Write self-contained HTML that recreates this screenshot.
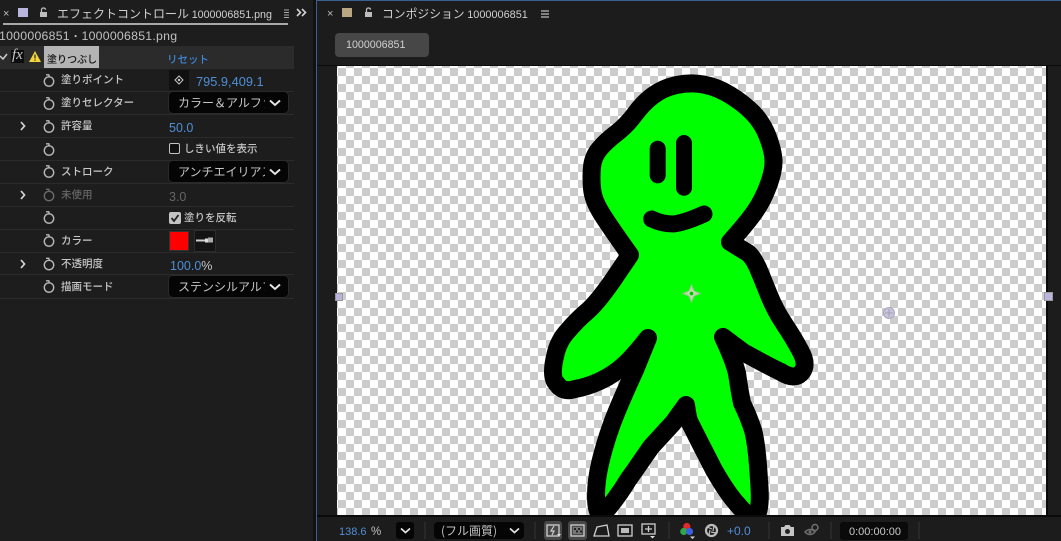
<!DOCTYPE html>
<html lang="ja"><head><meta charset="utf-8"><title>After Effects</title>
<style>
html,body{margin:0;padding:0;width:1061px;height:541px;overflow:hidden;background:#111}
body{position:relative;font-family:"Liberation Sans","Noto Sans CJK JP",sans-serif;color:#c8c8c8;font-size:11px;filter:blur(.3px)}
.a{position:absolute;white-space:nowrap}
.j{font-family:"Noto Sans CJK JP","Liberation Sans",sans-serif}
.lb{position:absolute;left:61px;font-family:"Noto Sans CJK JP",sans-serif;font-size:10.5px;line-height:16px;font-weight:500;color:#c8c8c8;white-space:nowrap}
.sep{position:absolute;left:0;width:294px;height:1px;background:#2b2b2b}
.bl{color:#4f8fd6}
.dd{position:absolute;left:169px;width:119px;height:21px;background:#050505;border-radius:4px;box-shadow:0 0 0 1px #2a2a2a}
.dd span{position:absolute;left:9px;top:0;width:87px;overflow:hidden;font-family:"Noto Sans CJK JP",sans-serif;font-size:12px;line-height:21px;color:#c6c6c6;white-space:nowrap}
.dv{position:absolute;top:522px;width:2px;height:17px;background:#282828}
svg{position:absolute;overflow:visible}
</style></head><body>

<!-- left panel -->
<div class="a" style="left:0;top:0;width:313px;height:541px;background:#1d1d1d"></div>
<div class="a" style="left:3px;top:23px;width:285px;height:2px;background:#a8a8a8"></div>
<div class="a" style="left:3px;top:6px;font-size:11px;line-height:16px;color:#bbb">×</div>
<div class="a" style="left:18px;top:8px;width:10px;height:9px;background:#b9b5dd"></div>
<svg style="left:39px;top:7px" width="9" height="11" viewBox="0 0 9 11"><path d="M1 5h7v5H1z" fill="#bdbdbd"/><path d="M2.5 5V2.8C2.5 1.5 3.5 1 4.500 1S6.500 1.500 6.500 2.800" fill="none" stroke="#bdbdbd" stroke-width="1.300"/></svg>
<div class="a j" style="left:57px;top:5px;font-size:12px;line-height:18px;color:#d0d0d0">エフェクトコントロール <span style="font-family:'Liberation Sans';font-size:10.700px">1000006851.png</span></div>
<svg style="left:284px;top:9px" width="5" height="10"><path d="M0 1h5M0 3.500h5M0 6h5M0 8.500h5" stroke="#aaa" stroke-width="1"/></svg>
<svg style="left:296px;top:8px" width="11" height="9"><path d="M1 1l3.500 3.500L1 8M6 1l3.500 3.500L6 8" fill="none" stroke="#d0d0d0" stroke-width="1.600"/></svg>
<div class="a" style="left:-1px;top:27px;font-size:12.300px;line-height:17px;color:#c0c0c0;letter-spacing:.25px">1000006851 <span class="j" style="font-size:10px;margin:0 -3px">・</span> 1000006851.png</div>

<div class="a" style="left:0;top:46px;width:294px;height:23px;background:#2b2b2b"></div>
<svg style="left:0;top:53px" width="8" height="8"><path d="M0 3l3 3 4-5" fill="none" stroke="#cfcfcf" stroke-width="1.500"/></svg>
<div class="a" style="left:11px;top:50px;width:13px;height:13px;background:#0d0d0d"></div>
<div class="a" style="left:12px;top:47px;font-family:'Liberation Serif';font-style:italic;font-size:15px;line-height:17px;color:#c8c8c8">fx</div>
<svg style="left:29px;top:51px" width="12" height="11"><path d="M6 0l6 11H0z" fill="#f3d33a"/><path d="M6 3.500v4M6 8.500v1.300" stroke="#222" stroke-width="1.200"/></svg>
<div class="a" style="left:44px;top:46px;width:55px;height:22px;background:#b4b4b4"></div>
<div class="a j" style="left:47px;top:51px;font-size:10px;line-height:16px;color:#111;font-weight:500">塗りつぶし</div>
<div class="a j bl" style="left:167px;top:52px;font-size:10.500px;line-height:16px;font-weight:500;color:#3f85d8">リセット</div>

<div class="sep" style="top:91px"></div><div class="sep" style="top:114px"></div><div class="sep" style="top:137px"></div><div class="sep" style="top:160px"></div><div class="sep" style="top:183px"></div><div class="sep" style="top:206px"></div><div class="sep" style="top:229px"></div><div class="sep" style="top:252px"></div><div class="sep" style="top:274px"></div><div class="sep" style="top:298px"></div>

<!-- stopwatches -->
<svg style="left:0;top:0" width="60" height="300" fill="none" stroke="#b8b8b8" stroke-width="1.400">
<g><circle cx="49" cy="81.500" r="4.700"/><path d="M46 74.800h3.500M49 75v2"/></g>
<g><circle cx="49" cy="104.500" r="4.700"/><path d="M46 97.800h3.500M49 98v2"/></g>
<g><circle cx="49" cy="127.500" r="4.700"/><path d="M46 120.800h3.500M49 121v2"/></g>
<g><circle cx="49" cy="150.500" r="4.700"/><path d="M46 143.800h3.500M49 144v2"/></g>
<g><circle cx="49" cy="172.500" r="4.700"/><path d="M46 165.800h3.500M49 166v2"/></g>
<g stroke="#6a6a6a"><circle cx="49" cy="196" r="4.700"/><path d="M46 189.300h3.500M49 189.500v2"/></g>
<g><circle cx="49" cy="218.500" r="4.700"/><path d="M46 211.800h3.500M49 212v2"/></g>
<g><circle cx="49" cy="241.500" r="4.700"/><path d="M46 234.800h3.500M49 235v2"/></g>
<g><circle cx="49" cy="265" r="4.700"/><path d="M46 258.300h3.500M49 258.500v2"/></g>
<g><circle cx="49" cy="287.500" r="4.700"/><path d="M46 280.800h3.500M49 281v2"/></g>
<g stroke="#d5d5d5" stroke-width="1.700"><path d="M21 122l3.500 4-3.500 4M21 191l3.500 4-3.500 4M21 260l3.500 4-3.500 4"/></g>
</svg>

<div class="lb" style="top:72px">塗りポイント</div>
<div class="lb" style="top:95px">塗りセレクター</div>
<div class="lb" style="top:118px">許容量</div>
<div class="lb" style="top:164px">ストローク</div>
<div class="lb" style="top:187px;color:#666">未使用</div>
<div class="lb" style="top:233px">カラー</div>
<div class="lb" style="top:256px">不透明度</div>
<div class="lb" style="top:279px">描画モード</div>

<div class="a" style="left:169px;top:70px;width:20px;height:20px;background:#101010"></div>
<svg style="left:174px;top:75px" width="10" height="10" fill="none" stroke="#c8c8c8"><path d="M5 1l4 4-4 4-4-4z"/><circle cx="5" cy="5" r=".7" fill="#c8c8c8"/></svg>
<div class="a bl" style="left:196px;top:74px;font-size:12.800px;line-height:16px">795.9,409.1</div>
<div class="dd" style="top:92px"><span>カラー＆アルファ</span></div>
<div class="a bl" style="left:169px;top:120px;font-size:12.500px;line-height:16px">50.0</div>
<div class="a" style="left:169px;top:143px;width:9px;height:9px;border:1.500px solid #c4c4c4;border-radius:2px;background:#111"></div>
<div class="a j" style="left:184px;top:141px;font-size:10.500px;line-height:16px;font-weight:500;color:#c4c4c4">しきい値を表示</div>
<div class="dd" style="top:161px"><span>アンチエイリアス</span></div>
<div class="a" style="left:169px;top:189px;font-size:12.500px;line-height:16px;color:#666">3.0</div>
<div class="a" style="left:169px;top:212px;width:12px;height:12px;background:#c4c4c4;border-radius:2px"></div>
<svg style="left:170px;top:213px" width="10" height="10"><path d="M1.500 5l2.500 3 4.500-6" fill="none" stroke="#222" stroke-width="1.800"/></svg>
<div class="a j" style="left:184px;top:210px;font-size:10.500px;line-height:16px;font-weight:500;color:#c4c4c4">塗りを反転</div>
<div class="a" style="left:170px;top:232px;width:18px;height:18px;background:#f00;box-shadow:0 0 0 1px #333"></div>
<div class="a" style="left:195px;top:231px;width:20px;height:20px;background:#131313;box-shadow:0 0 0 1px #2c2c2c"></div>
<svg style="left:195px;top:236px" width="20" height="9"><path d="M1 4.500h9" stroke="#ccc" stroke-width="2"/><path d="M10 2.500h3v4h-3z" fill="#ddd"/><path d="M13 1.500h5v5h-5z" fill="#aaa"/></svg>
<div class="a" style="left:170px;top:258px;font-size:12.500px;line-height:16px;color:#c8c8c8"><span class="bl">100.0</span>%</div>
<div class="dd" style="top:276px"><span>ステンシルアルファ</span></div>
<svg style="left:0;top:0" width="294" height="300" fill="none" stroke="#e6e6e6" stroke-width="1.900"><path d="M270 100.500l5 4.500 5-4.500M270 169.500l5 4.500 5-4.500M270 284.500l5 4.500 5-4.500"/></svg>

<!-- right panel -->
<div class="a" style="left:316px;top:0;width:745px;height:541px;background:#1c1c1c;border-left:1.500px solid #3c5f92;border-top:1.500px solid #3c5f92;box-sizing:border-box"></div>
<div class="a" style="left:327px;top:6px;font-size:11px;line-height:16px;color:#bbb">×</div>
<div class="a" style="left:342px;top:8px;width:10px;height:9px;background:#b9a682"></div>
<svg style="left:364px;top:7px" width="9" height="11" viewBox="0 0 9 11"><path d="M1 5h7v5H1z" fill="#bdbdbd"/><path d="M2.500 5V2.800C2.500 1.500 3.500 1 4.500 1S6.500 1.500 6.500 2.800" fill="none" stroke="#bdbdbd" stroke-width="1.300"/></svg>
<div class="a j" style="left:382px;top:5px;font-size:11.800px;line-height:18px;color:#d0d0d0">コンポジション <span style="font-family:'Liberation Sans';font-size:10.900px">1000006851</span></div>
<svg style="left:541px;top:10px" width="8" height="8"><path d="M0 1h8M0 4h8M0 7h8" stroke="#bbb" stroke-width="1.200"/></svg>
<div class="a" style="left:335px;top:33px;width:94px;height:24px;background:#474747;border-radius:4px"></div>
<div class="a" style="left:346px;top:38px;font-size:10.700px;line-height:15px;color:#d0d0d0">1000006851</div>

<!-- viewer -->
<div class="a" style="left:317px;top:65px;width:744px;height:1px;background:#0c0c0c"></div>
<div class="a" style="left:1046px;top:66px;width:2px;height:451px;background:#0a0a0a"></div>
<div class="a" style="left:317px;top:515px;width:744px;height:2px;background:#0a0a0a"></div>
<div class="a" style="left:337px;top:66px;width:709px;height:449px;overflow:hidden;background:conic-gradient(#fff 25%,#ccc 0 50%,#fff 0 75%,#ccc 0) 1px 2px/16px 16px">
<svg style="left:-337px;top:-66px" width="1061" height="541">
<path d="M730 242Q747 223 755 211.500Q763 200 768.500 185Q774 170 773.500 160Q773 150 767.500 136Q762 122 752.500 112.500Q743 103 730 95Q717 87 703.500 84.500Q690 82 676.500 85Q663 88 653 95.500Q643 103 635 114Q627 125 616 133.500Q605 142 599 149.500Q593 157 592 167Q591 177 592 188.500Q593 200 601.500 213.500Q610 227 630 255Q621 268 613 280Q597 303 587 311.500Q577 320 568.500 330Q558 341 555 356.500Q550 378 557 384Q563 393 575 389Q587 387 600 381Q613 375 623 366Q633 357 648 338L635 370Q618 407 611.500 425Q605 443 600.500 461.500Q596 480 596 496Q596 514 602 515Q616 500 628 480Q640 463 651 447Q662 435 673 423L686 405Q688 420 690 423Q702 447 714 470Q727 493 738 505Q752 522 758 512Q761 503 759 480Q757 445 753 430Q748 415 742 403Q739 388 737 373Q733 358 723 337L743 352Q770 367 781 372Q795 381 802 372Q808 364 800 350Q793 337 784 323.500Q775 310 769 295Q763 280 758 268Q753 257 748 253Q743 250 730 242Z" fill="#00ff00" stroke="#000" stroke-width="18" stroke-linejoin="round"/>
<path d="M657.700 148.700V175.300M684 143V187.700" fill="none" stroke="#000" stroke-width="16" stroke-linecap="round"/>
<path d="M651.700 219Q662 224 673 224Q684 223 704 214" fill="none" stroke="#000" stroke-width="17" stroke-linecap="round"/>
<path d="M691.500 285l2.500 6 6 2.500-6 2.500-2.500 6-2.500-6-6-2.500 6-2.500z" fill="#b9d9a8" stroke="#9fc48f" stroke-width="1"/>
<circle cx="691.500" cy="293.500" r="2.500" fill="#00c800" stroke="#d8ecd0"/>
<circle cx="889" cy="313" r="5.500" fill="#c6c3dc" stroke="#a8a6bc"/>
<path d="M889 309v8M885 313h8" stroke="#9a98ac" stroke-width=".8"/>
</svg></div>
<div class="a" style="left:335px;top:293px;width:6px;height:6px;background:#b9b5dd;border:.5px solid #999"></div>
<div class="a" style="left:1044px;top:292px;width:7px;height:7px;background:#b9b5dd;border:.5px solid #999"></div>

<!-- footer -->
<div class="a" style="left:339px;top:525px;font-size:11px;line-height:14px;color:#4f8fd6">138.6</div>
<div class="a" style="left:371px;top:525px;font-size:11.500px;line-height:14px;color:#c0c0c0">%</div>
<div class="a" style="left:396px;top:522px;width:18px;height:17px;background:#050505;border-radius:3px"></div>
<div class="dv" style="left:424px"></div>
<div class="a" style="left:434px;top:522px;width:90px;height:17px;background:#050505;border-radius:4px"></div>
<div class="a j" style="left:441px;top:523px;font-size:12px;line-height:16px;color:#c0c0c0">(フル画質)</div>
<div class="dv" style="left:534px"></div>
<div class="a" style="left:544px;top:521px;width:18px;height:19px;background:#484848;border-radius:3px"></div>
<div class="a" style="left:568px;top:521px;width:19px;height:19px;background:#484848;border-radius:3px"></div>
<div class="dv" style="left:668px"></div>
<div class="a bl" style="left:727px;top:524px;font-size:12px;line-height:15px">+0.0</div>
<div class="dv" style="left:768px"></div>
<div class="dv" style="left:830px"></div>
<div class="a" style="left:840px;top:522px;width:68px;height:18px;background:#0a0a0a;border-radius:3px"></div>
<div class="a" style="left:849px;top:525px;font-size:11px;line-height:14px;color:#c8c8c8">0:00:00:00</div>
<div class="dv" style="left:918px"></div>
<svg style="left:0;top:0" width="1061" height="541" fill="none" stroke="#cfcfcf" stroke-width="1.300">
<path d="M401 528.500l4.500 4 4.500-4M510 528.500l4.500 4 4.500-4" stroke="#e6e6e6" stroke-width="1.700"/>
<rect x="547" y="525" width="12" height="11"/><path d="M554 526l-3 5h3l-2 4" stroke-width="1.200"/><path d="M557 534h4l-2 2.500z" fill="#ddd" stroke="none"/>
<rect x="571" y="525" width="13" height="11"/><path d="M573 527h9v7h-9z" fill="#777" stroke="none"/><path d="M574 528h2v2h-2zM578 528h2v2h-2zM576 530.500h2v2h-2zM580 530.500h2v2h-2z" fill="#222" stroke="none"/>
<path d="M597 527l10-2 2 11h-15z"/>
<rect x="618" y="525" width="14" height="11"/><rect x="621" y="528" width="8" height="5" fill="#bbb" stroke="none"/>
<rect x="642" y="524" width="13" height="10"/><path d="M648.500 526v6M645 529h7"/><path d="M650 536h5l-2.500 2.500z" fill="#ddd" stroke="none"/>
<circle cx="686.800" cy="526.500" r="3.600" fill="#e02a2a" stroke="none"/><circle cx="683.800" cy="531.500" r="3.600" fill="#2fa84a" stroke="none"/><circle cx="689.500" cy="531.500" r="3.600" fill="#3a60e0" stroke="none"/><path d="M690 536.500h5l-2.500 2.500z" fill="#ddd" stroke="none"/>
<circle cx="711.500" cy="530.500" r="5.500" stroke-width="2.200" stroke="#bdbdbd"/><path d="M707 527l5 2M714 526l-1 5M716 533l-5-1M709 535l1-5" stroke="#bdbdbd" stroke-width="1.200"/>
<path d="M781 527h3l1.500-2h4l1.500 2h3v9h-13z" fill="#c4c4c4" stroke="none"/><circle cx="787.500" cy="531.500" r="2.500" fill="#222" stroke="none"/>
<path d="M805 532q5-5 10 0q-5 5-10 0z" stroke="#6f6f6f" stroke-width="1.500"/><circle cx="810" cy="532" r="1.500" fill="#6f6f6f" stroke="none"/><circle cx="815" cy="527.500" r="3" stroke="#6f6f6f" stroke-width="1.500"/>
</svg>
</body></html>
